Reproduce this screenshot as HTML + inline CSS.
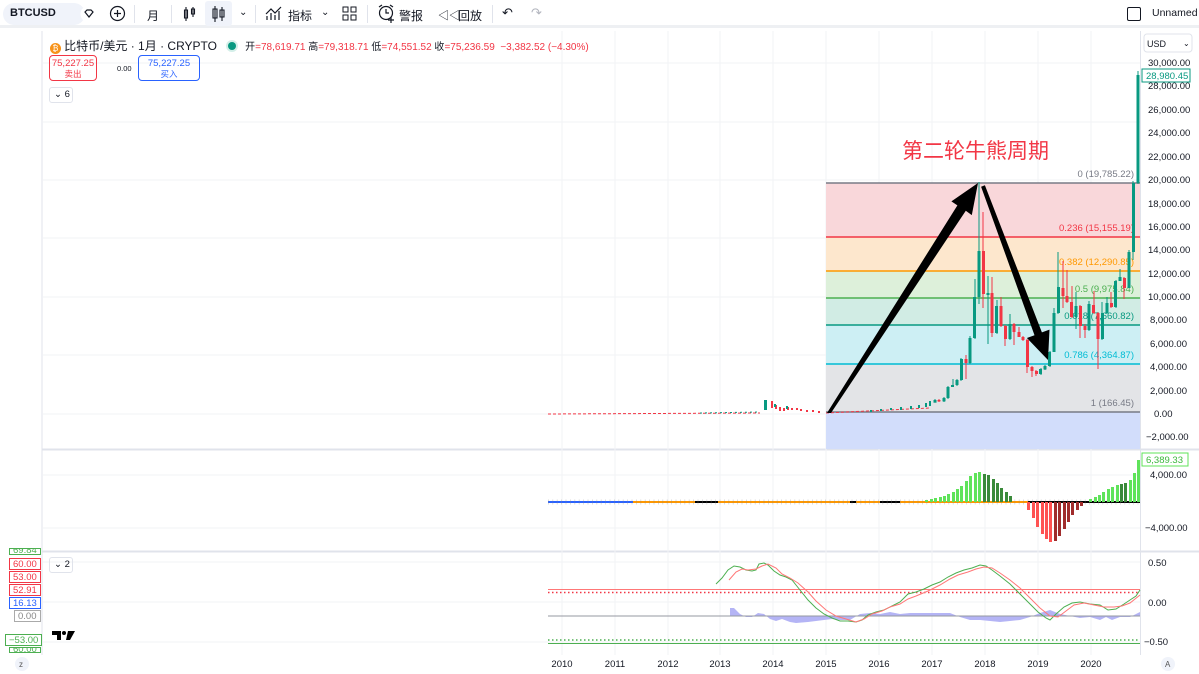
<!DOCTYPE html>
<html><head><meta charset="utf-8"><style>
*{margin:0;padding:0;box-sizing:border-box}
body{width:1199px;height:674px;overflow:hidden;background:#fff;font-family:"Liberation Sans","Noto Sans CJK SC",sans-serif;position:relative;color:#131722}
.tb{position:absolute;left:0;top:0;width:1199px;height:28px;border-bottom:3px solid #eef0f3;background:#fff}
.t{position:absolute;font-size:12px;top:7px}
.sep{position:absolute;top:5px;width:1px;height:18px;background:#e0e3eb}
.lb{position:absolute;font-size:9.5px;height:12px;line-height:11px;padding:0 3px;border:1px solid;background:#fff}
</style></head><body>
<div class="tb">
 <div style="position:absolute;left:3px;top:3px;width:82px;height:22px;border-radius:11px;background:#f0f3fa"></div>
 <div class="t" style="left:10px;font-weight:bold;font-size:11px">BTCUSD</div>
 <svg style="position:absolute;left:80px;top:5px" width="18" height="18" viewBox="0 0 18 18"><circle cx="9" cy="9" r="8.5" fill="#fff"/><path d="M5 7l2-2h4l2 2-4 5z" fill="none" stroke="#131722" stroke-width="1.2"/></svg>
 <svg style="position:absolute;left:109px;top:5px" width="17" height="17"><circle cx="8.5" cy="8.5" r="7" fill="none" stroke="#131722" stroke-width="1.2"/><path d="M8.5 5v7M5 8.5h7" stroke="#131722" stroke-width="1.2"/></svg>
 <div class="sep" style="left:134px"></div>
 <div class="t" style="left:147px">月</div>
 <div class="sep" style="left:171px"></div>
 <svg style="position:absolute;left:182px;top:5px" width="16" height="18"><path d="M4 2v14M2.5 5h3v8h-3zM11 2v10M9.5 4h3v5h-3z" fill="none" stroke="#131722" stroke-width="1.1"/></svg>
 <div style="position:absolute;left:205px;top:1px;width:27px;height:25px;background:#f0f3fa;border-radius:3px"></div>
 <svg style="position:absolute;left:211px;top:5px" width="16" height="18"><path d="M4 1v16M2 4h4v9H2zM11 2v14M9 5h4v7H9z" fill="none" stroke="#131722" stroke-width="1.1"/></svg>
 <div class="t" style="left:239px;font-size:10px">⌄</div>
 <div class="sep" style="left:255px"></div>
 <svg style="position:absolute;left:265px;top:5px" width="18" height="17"><path d="M2 15V11M6 15V8M10 15V10M14 15V6M1 9l5-5 4 4 6-6" fill="none" stroke="#131722" stroke-width="1.2"/></svg>
 <div class="t" style="left:288px">指标</div>
 <div class="t" style="left:321px;font-size:10px">⌄</div>
 <svg style="position:absolute;left:342px;top:6px" width="15" height="15"><rect x="1" y="1" width="5" height="5" fill="none" stroke="#131722"/><rect x="9" y="1" width="5" height="5" fill="none" stroke="#131722"/><rect x="1" y="9" width="5" height="5" fill="none" stroke="#131722"/><rect x="9" y="9" width="5" height="5" fill="none" stroke="#131722"/></svg>
 <div class="sep" style="left:367px"></div>
 <svg style="position:absolute;left:377px;top:4px" width="19" height="19"><circle cx="9" cy="9" r="6.5" fill="none" stroke="#131722" stroke-width="1.2"/><path d="M9 5v4h3M2 3l3-2M16 3l-3-2M14 13v6M11 16h6" stroke="#131722" stroke-width="1.2" fill="none"/></svg>
 <div class="t" style="left:399px">警报</div>
 <div class="t" style="left:438px;font-size:11px">◁◁</div>
 <div class="t" style="left:458px">回放</div>
 <div class="sep" style="left:492px"></div>
 <div class="t" style="left:502px;font-size:13px;top:5px">↶</div>
 <div class="t" style="left:531px;font-size:13px;top:5px;color:#b2b5be">↷</div>
 <div style="position:absolute;left:1127px;top:7px;width:14px;height:14px;border:1.3px solid #131722;border-radius:2px"></div>
 <div class="t" style="left:1152px;font-size:10.5px">Unnamed</div>
</div>

<svg style="position:absolute;left:0;top:0" width="1199" height="674" font-family="Liberation Sans, sans-serif">
 <line x1="42" y1="31" x2="42" y2="655" stroke="#e0e3eb"/>
 <line x1="42" y1="449.5" x2="1199" y2="449.5" stroke="#e0e3eb" stroke-width="2"/>
 <line x1="42" y1="551.5" x2="1199" y2="551.5" stroke="#e0e3eb" stroke-width="2"/>
 <line x1="1140.5" y1="31" x2="1140.5" y2="655" stroke="#e0e3eb"/>
 <g stroke="#f2f3f6">
  <line x1="43" y1="63" x2="1140" y2="63"/><line x1="43" y1="122" x2="1140" y2="122"/><line x1="43" y1="180" x2="1140" y2="180"/><line x1="43" y1="238" x2="1140" y2="238"/><line x1="43" y1="297" x2="1140" y2="297"/><line x1="43" y1="355" x2="1140" y2="355"/><line x1="43" y1="414" x2="1140" y2="414"/>
  <line x1="43" y1="475" x2="1140" y2="475"/><line x1="43" y1="528" x2="1140" y2="528"/>
  <line x1="43" y1="562" x2="1140" y2="562"/><line x1="43" y1="602" x2="1140" y2="602"/><line x1="43" y1="642" x2="1140" y2="642"/>
  <line x1="562" y1="31" x2="562" y2="655"/><line x1="615" y1="31" x2="615" y2="655"/><line x1="668" y1="31" x2="668" y2="655"/><line x1="720" y1="31" x2="720" y2="655"/><line x1="773" y1="31" x2="773" y2="655"/><line x1="826" y1="31" x2="826" y2="655"/><line x1="879" y1="31" x2="879" y2="655"/><line x1="932" y1="31" x2="932" y2="655"/><line x1="985" y1="31" x2="985" y2="655"/><line x1="1038" y1="31" x2="1038" y2="655"/><line x1="1091" y1="31" x2="1091" y2="655"/>
 </g>
 <rect x="826" y="183" width="314" height="54" fill="#f9d7da"/>
 <rect x="826" y="237" width="314" height="34" fill="#fde7cd"/>
 <rect x="826" y="271" width="314" height="27" fill="#ddf0da"/>
 <rect x="826" y="298" width="314" height="27" fill="#d1ece4"/>
 <rect x="826" y="325" width="314" height="39" fill="#cdeff4"/>
 <rect x="826" y="364" width="314" height="48" fill="#e3e4e7"/>
 <rect x="826" y="412" width="314" height="37" fill="#d2ddfb"/>
 <line x1="826" y1="183" x2="1140" y2="183" stroke="#787b86" stroke-width="1.5"/>
 <line x1="826" y1="237" x2="1140" y2="237" stroke="#f23645" stroke-width="1.5"/>
 <line x1="826" y1="271" x2="1140" y2="271" stroke="#ff9800" stroke-width="1.5"/>
 <line x1="826" y1="298" x2="1140" y2="298" stroke="#4caf50" stroke-width="1.5"/>
 <line x1="826" y1="325" x2="1140" y2="325" stroke="#089981" stroke-width="1.5"/>
 <line x1="826" y1="364" x2="1140" y2="364" stroke="#00bcd4" stroke-width="1.5"/>
 <line x1="826" y1="412" x2="1140" y2="412" stroke="#787b86" stroke-width="1.5"/>
 <g font-size="9.5" text-anchor="end">
  <text x="1134" y="177" fill="#787b86">0 (19,785.22)</text>
  <text x="1134" y="231" fill="#f23645">0.236 (15,155.19)</text>
  <text x="1134" y="265" fill="#ff9800">0.382 (12,290.85)</text>
  <text x="1134" y="292" fill="#4caf50">0.5 (9,975.84)</text>
  <text x="1134" y="319" fill="#089981">0.618 (7,660.82)</text>
  <text x="1134" y="358" fill="#00bcd4">0.786 (4,364.87)</text>
  <text x="1134" y="406" fill="#787b86">1 (166.45)</text>
 </g>
 <line x1="548" y1="414" x2="760" y2="413" stroke="#f23645" stroke-width="1" stroke-dasharray="3 2"/>
 <line x1="700" y1="413" x2="760" y2="412" stroke="#089981" stroke-width="1" stroke-dasharray="2 3"/>
 <path d="M765 400h2v10h-2zM771 401h2v7h-2zM775 405h2v4h-2zM779 407h2v4h-2zM783 408h2v3h-2zM787 407h2v3h-2zM791 408h2v2h-2zM796 408h2v2h-2zM800 409h2v2h-2zM806 410h2v2h-2zM812 410h2v2h-2zM818 411h2v2h-2z" fill="#f23645"/>
 <path d="M764 400h3v10h-3zM774 404h2v3h-2zM786 406h2v3h-2z" fill="#089981"/>
 <line x1="826" y1="413" x2="930" y2="408" stroke="#f23645" stroke-dasharray="3 2"/>
 <path d="M870 410h2v2h-2zM880 409h2v2h-2zM890 408h2v2h-2zM900 407h2v3h-2zM910 406h2v3h-2zM918 405h2v3h-2zM925 403h2v4h-2zM929 401h2v5h-2z" fill="#089981"/>
 <g stroke-width="1">
 <path stroke="#089981" d="M935 399v3M944 397v5M948 386v13M953 379v7M957 379v7M961 358v23M970 336v28M975 279v60M979 182v122M988 276v68M997 300v34M1010 314v26M1041 368v7M1045 365v5M1050 351v16M1054 308v6M1058 252v62M1076 292v37M1089 301v30M1102 302v38M1107 297v17M1116 280v28M1120 269v10M1129 250v38M1133 181v79M1138 71v113"/>
 <path stroke="#f23645" d="M939 399v3M966 355v24M983 212v96M992 277v60M1001 297v30M1005 325v21M1014 323v22M1019 327v10M1023 336v5M1027 339v34M1032 366v11M1036 370v6M1063 261v47M1067 270v33M1072 286v32M1080 305v33M1085 324v14M1094 291v23M1098 312v57M1111 292v16M1124 277v22"/>
 </g>
 <g fill="#089981">
  <rect x="933.5" y="400" width="3" height="2.7"/><rect x="942.5" y="398" width="3" height="3.4"/><rect x="946.5" y="387" width="3" height="11"/><rect x="951" y="385" width="3" height="2"/><rect x="955.5" y="380" width="3" height="5"/><rect x="960" y="359" width="3" height="21"/><rect x="968.5" y="338" width="3" height="25"/><rect x="973" y="297" width="3" height="41"/><rect x="977.5" y="251" width="3" height="46"/><rect x="986.5" y="293" width="3" height="2"/><rect x="995" y="306" width="3" height="27"/><rect x="1008.5" y="324" width="3" height="15"/><rect x="1039" y="369" width="3" height="5"/><rect x="1043.5" y="366" width="3" height="3.5"/><rect x="1048" y="352" width="3" height="14"/><rect x="1052.5" y="313" width="3" height="39"/><rect x="1057" y="287" width="3" height="26"/><rect x="1074.5" y="306" width="3" height="11"/><rect x="1087.5" y="304" width="3" height="26"/><rect x="1101" y="313" width="3" height="26"/><rect x="1105.5" y="303" width="3" height="10"/><rect x="1114" y="281" width="3" height="26"/><rect x="1118.5" y="277" width="3" height="4"/><rect x="1127.5" y="252" width="3" height="36"/><rect x="1132" y="183" width="3" height="69"/><rect x="1136.5" y="75" width="3" height="108"/>
 </g>
 <g fill="#f23645">
  <rect x="937.5" y="400" width="3" height="1.4"/><rect x="964.5" y="359" width="3" height="4"/><rect x="982" y="251" width="3" height="43"/><rect x="990.5" y="293" width="3" height="40"/><rect x="999.5" y="306" width="3" height="20"/><rect x="1004" y="326" width="3" height="13"/><rect x="1012.5" y="324" width="3" height="8"/><rect x="1017.5" y="332" width="3" height="5"/><rect x="1021.5" y="337" width="3" height="3"/><rect x="1026" y="340" width="3" height="27"/><rect x="1030.5" y="367" width="3" height="4"/><rect x="1035" y="371" width="3" height="3"/><rect x="1061.5" y="288" width="3" height="8"/><rect x="1065.5" y="296" width="3" height="6"/><rect x="1070" y="302" width="3" height="15"/><rect x="1079" y="306" width="3" height="20"/><rect x="1083.5" y="326" width="3" height="4"/><rect x="1092" y="305" width="3" height="8"/><rect x="1096.5" y="313" width="3" height="26"/><rect x="1110" y="303" width="3" height="4"/><rect x="1123" y="278" width="3" height="10"/>
 </g>
 <!-- arrows -->
 <polygon points="827,413 957.4,205.4 951.4,201.4 978,183 971.8,215.1 965.8,210.8 831,413" fill="#000"/>
 <polygon points="981.1,186.7 1034.5,335.2 1026.9,338 1048,360 1049.5,329.6 1041.9,332.4 984.9,185.3" fill="#000"/>
 <text x="902" y="158" font-size="21" fill="#f23645" font-family="Noto Sans CJK SC, sans-serif">第二轮牛熊周期</text>

 <line x1="548" y1="502" x2="633" y2="502" stroke="#2962ff" stroke-width="2"/>
 <line x1="633" y1="502" x2="1028" y2="502" stroke="#ff9800" stroke-width="2"/>
 <line x1="695" y1="502" x2="718" y2="502" stroke="#000" stroke-width="2"/>
 <line x1="850" y1="502" x2="856" y2="502" stroke="#000" stroke-width="2"/>
 <line x1="880" y1="502" x2="900" y2="502" stroke="#000" stroke-width="2"/>
 <line x1="1028" y1="502" x2="1140" y2="502" stroke="#000" stroke-width="2"/>
 <line x1="548" y1="502" x2="1140" y2="502" stroke="#888" stroke-width="5" stroke-dasharray="0.8 3.6" opacity="0.35"/>
 <g fill="#5fe35a">
  <rect x="925" y="500" width="3" height="2"/><rect x="930" y="499" width="3" height="3"/><rect x="934" y="498" width="3" height="4"/><rect x="939" y="497" width="3" height="5"/><rect x="943" y="496" width="3" height="6"/><rect x="947" y="494" width="3" height="8"/><rect x="952" y="492" width="3" height="10"/><rect x="956" y="489" width="3" height="13"/><rect x="960" y="486" width="3" height="16"/><rect x="965" y="481" width="3" height="21"/><rect x="969" y="476" width="3" height="26"/><rect x="974" y="473" width="3" height="29"/><rect x="978" y="472" width="3" height="30"/>
  <rect x="1089" y="499" width="3" height="3"/><rect x="1094" y="497" width="3" height="5"/><rect x="1098" y="495" width="3" height="7"/><rect x="1102" y="492" width="3" height="10"/><rect x="1107" y="489" width="3" height="13"/><rect x="1111" y="487" width="3" height="15"/><rect x="1116" y="485" width="3" height="17"/><rect x="1129" y="480" width="3" height="22"/><rect x="1133" y="473" width="3" height="29"/><rect x="1137" y="460" width="3" height="42"/>
 </g>
 <g fill="#3a8a3a"><rect x="983" y="474" width="3" height="28"/><rect x="987" y="475" width="3" height="27"/><rect x="992" y="479" width="3" height="23"/><rect x="996" y="483" width="3" height="19"/><rect x="1000" y="488" width="3" height="14"/><rect x="1005" y="492" width="3" height="10"/><rect x="1009" y="496" width="3" height="6"/><rect x="1120" y="484" width="3" height="18"/><rect x="1124" y="483" width="3" height="19"/></g>
 <g fill="#ff5252"><rect x="1027" y="502" width="3" height="8"/><rect x="1032" y="502" width="3" height="16"/><rect x="1036" y="502" width="3" height="25"/><rect x="1041" y="502" width="3" height="32"/><rect x="1045" y="502" width="3" height="37"/><rect x="1049" y="502" width="3" height="40"/></g>
 <g fill="#a02c2c"><rect x="1054" y="502" width="3" height="39"/><rect x="1058" y="502" width="3" height="34"/><rect x="1063" y="502" width="3" height="27"/><rect x="1067" y="502" width="3" height="20"/><rect x="1071" y="502" width="3" height="13"/><rect x="1076" y="502" width="3" height="8"/><rect x="1080" y="502" width="3" height="4"/></g>

 <line x1="548" y1="589.5" x2="1140" y2="589.5" stroke="#f77" stroke-width="1"/>
 <line x1="548" y1="592.5" x2="1140" y2="592.5" stroke="#f23645" stroke-width="1.5" stroke-dasharray="1.5 2.5"/>
 <line x1="548" y1="640" x2="1140" y2="640" stroke="#4caf50" stroke-width="1.5" stroke-dasharray="1.5 2.5"/>
 <line x1="548" y1="643.5" x2="1140" y2="643.5" stroke="#4caf50" stroke-width="1"/>
 <path d="M730 616L730 608L734 608L740 614L746 617L752 617L758 613L764 614L770 619L776 621L782 619L790 622L796 623L808 622L816 621L832 619L840 620L850 620L860 614L870 613L880 614L890 612L900 614L910 613L920 613L940 613L950 613L960 617L970 620L980 620L990 621L1000 622L1010 621L1020 620L1030 617L1040 613L1050 610L1060 614L1070 616L1080 618L1090 617L1100 620L1106 617L1112 620L1120 617L1130 617L1140 612L1140 616Z" fill="#b4b4f5"/>
 <line x1="548" y1="616" x2="1140" y2="616" stroke="#9598a1" stroke-width="1"/>
 <polyline fill="none" stroke="#4caf50" stroke-width="1" points="716,584 722,578 728,570 734,566 740,567 746,570 752,571 756,570 759,564 764,563 768,565 774,571 780,575 786,577 792,580 800,590 808,600 816,608 824,614 832,618 840,621 848,621 856,622 862,620 868,615 876,612 884,610 892,606 900,602 908,594 916,592 924,589 932,585 940,582 948,577 956,573 964,570 972,568 980,565 986,566 992,570 1000,576 1010,584 1020,594 1030,604 1038,612 1046,618 1050,620 1056,614 1064,607 1072,603 1080,602 1090,604 1100,605 1108,610 1116,609 1124,604 1130,600 1136,596 1140,590"/>
 <polyline fill="none" stroke="#f77" stroke-width="1" points="729,580 736,572 742,569 748,570 756,569 762,566 768,564 776,568 782,574 790,578 798,583 808,592 816,601 826,610 836,616 846,619 856,622 864,619 872,614 882,611 890,607 900,604 908,599 916,596 928,591 940,585 950,579 958,575 968,572 976,569 984,567 992,568 1000,573 1010,580 1020,588 1030,598 1040,608 1050,616 1058,617 1066,611 1074,605 1084,603 1094,605 1104,607 1114,607 1122,606 1130,603 1140,595"/>

 <g font-size="9.5" fill="#131722">
  <text x="1148" y="66">30,000.00</text><text x="1148" y="89">28,000.00</text><text x="1148" y="113">26,000.00</text><text x="1148" y="136">24,000.00</text><text x="1148" y="160">22,000.00</text><text x="1148" y="183">20,000.00</text><text x="1148" y="207">18,000.00</text><text x="1148" y="230">16,000.00</text><text x="1148" y="253">14,000.00</text><text x="1148" y="277">12,000.00</text><text x="1148" y="300">10,000.00</text><text x="1150" y="323">8,000.00</text><text x="1150" y="347">6,000.00</text><text x="1150" y="370">4,000.00</text><text x="1150" y="394">2,000.00</text><text x="1154" y="417">0.00</text><text x="1146" y="440">−2,000.00</text>
  <text x="1150" y="478">4,000.00</text><text x="1145" y="531">−4,000.00</text>
  <text x="1148" y="566">0.50</text><text x="1148" y="606">0.00</text><text x="1144" y="645">−0.50</text>
 </g>
 <rect x="1142" y="69" width="48" height="13" fill="#fff" stroke="#089981"/>
 <text x="1146" y="79" font-size="9.5" fill="#089981">28,980.45</text>
 <rect x="1142" y="453" width="46" height="13" fill="#fff" stroke="#5fe35a"/>
 <text x="1146" y="463" font-size="9.5" fill="#3cb83c">6,389.33</text>
 <rect x="1144" y="34" width="48" height="18" rx="3" fill="#fff" stroke="#e0e3eb"/>
 <text x="1147" y="47" font-size="9" fill="#131722">USD</text>
 <text x="1183" y="46" font-size="8" fill="#131722">⌄</text>
 <circle cx="1168" cy="664" r="7" fill="#f0f3fa"/><text x="1165" y="667" font-size="8" fill="#555">A</text>
 <circle cx="22" cy="664" r="7" fill="#f0f3fa"/><text x="19" y="667" font-size="8" fill="#555">z</text>
 <g font-size="9.5" fill="#131722" text-anchor="middle">
  <text x="562" y="667">2010</text><text x="615" y="667">2011</text><text x="668" y="667">2012</text><text x="720" y="667">2013</text><text x="773" y="667">2014</text><text x="826" y="667">2015</text><text x="879" y="667">2016</text><text x="932" y="667">2017</text><text x="985" y="667">2018</text><text x="1038" y="667">2019</text><text x="1091" y="667">2020</text>
 </g>
 <path d="M52 631h9v9h-4v-5h-5z" fill="#000"/><circle cx="64" cy="633" r="2" fill="#000"/><path d="M68 631h7l-5 9h-4z" fill="#000"/>
</svg>

<div style="position:absolute;left:50px;top:37px;font-size:11px;white-space:nowrap">
 <span style="display:inline-block;width:11px;height:11px;border-radius:50%;background:#f7931a;vertical-align:-1px;color:#fff;font-size:8px;text-align:center;line-height:11px">₿</span>
 <span style="font-family:'Liberation Sans','Noto Sans CJK SC',sans-serif;font-size:12px"> 比特币/美元 · 1月 · CRYPTO</span>
 <span style="display:inline-block;width:8px;height:8px;border-radius:50%;background:#089981;margin:0 6px 0 8px;box-shadow:0 0 0 2px #d4efe9"></span>
 <span style="font-size:10px">开<span style="color:#f23645">=78,619.71</span> 高<span style="color:#f23645">=79,318.71</span> 低<span style="color:#f23645">=74,551.52</span> 收<span style="color:#f23645">=75,236.59 &nbsp;−3,382.52 (−4.30%)</span></span>
</div>
<div style="position:absolute;left:49px;top:55px;width:48px;height:26px;border:1px solid #f23645;border-radius:4px;text-align:center;color:#f23645;font-size:9.5px;line-height:11px;padding-top:2px">75,227.25<br><span style="font-size:8.5px">卖出</span></div>
<div style="position:absolute;left:117px;top:64px;font-size:7.5px">0.00</div>
<div style="position:absolute;left:138px;top:55px;width:62px;height:26px;border:1px solid #2962ff;border-radius:4px;text-align:center;color:#2962ff;font-size:9.5px;line-height:11px;padding-top:2px">75,227.25<br><span style="font-size:8.5px">买入</span></div>
<div style="position:absolute;left:49px;top:87px;width:24px;height:16px;border:1px solid #e0e3eb;border-radius:3px;font-size:9.5px;line-height:14px;padding-left:4px">⌄ 6</div>
<div style="position:absolute;left:49px;top:557px;width:24px;height:16px;border:1px solid #e0e3eb;border-radius:3px;font-size:9.5px;line-height:14px;padding-left:4px">⌄ 2</div>

<div class="lb" style="left:9px;top:548px;color:#4caf50;border-color:#4caf50;height:7px;overflow:hidden;line-height:4px">69.84</div>
<div class="lb" style="left:9px;top:558px;color:#f23645;border-color:#f23645">60.00</div>
<div class="lb" style="left:9px;top:571px;color:#f23645;border-color:#f23645">53.00</div>
<div class="lb" style="left:9px;top:584px;color:#f23645;border-color:#f23645">52.91</div>
<div class="lb" style="left:9px;top:597px;color:#2962ff;border-color:#2962ff">16.13</div>
<div class="lb" style="left:14px;top:610px;color:#888;border-color:#aaa">0.00</div>
<div class="lb" style="left:5px;top:634px;color:#4caf50;border-color:#4caf50">−53.00</div>
<div class="lb" style="left:9px;top:647px;color:#4caf50;border-color:#4caf50;height:6px;overflow:hidden;line-height:3px">60.00</div>
</body></html>
